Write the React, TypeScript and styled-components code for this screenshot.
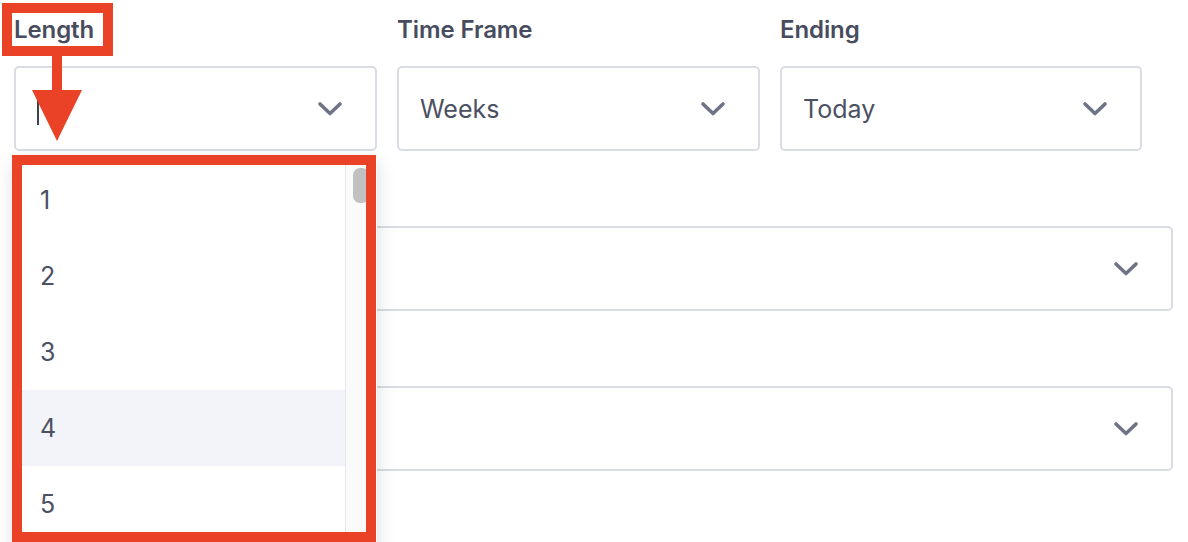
import { createGlobalStyle, styled } from "styled-components";

const GlobalStyle = createGlobalStyle`
	html, body {
		margin: 0;
		padding: 0;
		background: #ffffff;
		overflow: hidden;
	}
	#root {
		height: 542px;
		overflow: hidden;
	}
`;

const lengths = [1, 2, 3, 4, 5];

const Chevron = () => (
	<svg width="26" height="16" viewBox="0 0 26 16" fill="none">
		<polyline points="3,3 13,12.5 23,3" stroke="#6e7385" strokeWidth="3.6" strokeLinecap="round" strokeLinejoin="round" />
	</svg>
);

const App = () => {
	return (
		<>
			<GlobalStyle />
			<Page>
				<Row>
					<Field $width="363px">
						<Label>Length</Label>
						<Select>
							<Caret />
							<Chevron />
						</Select>
						<Menu>
							<List>
								{lengths.map(n => (
									<Item key={n} $active={n === 4}>{n}</Item>
								))}
							</List>
							<Track>
								<Thumb />
							</Track>
						</Menu>
						<LabelMark />
						<Arrow width="50" height="86" viewBox="0 0 50 86">
							<rect x="20" y="0" width="10" height="36" fill="#e94226" />
							<polygon points="0,34 50,34 25,85" fill="#e94226" />
						</Arrow>
						<MenuMark />
					</Field>
					<Field $width="363px">
						<Label>Time Frame</Label>
						<Select>
							<Value>Weeks</Value>
							<Chevron />
						</Select>
					</Field>
					<Field $width="362px">
						<Label>Ending</Label>
						<Select>
							<Value>Today</Value>
							<Chevron />
						</Select>
					</Field>
				</Row>
				<Field $width="100%" $spaced>
					<Label />
					<Select>
						<Value />
						<Chevron />
					</Select>
				</Field>
				<Field $width="100%" $spaced>
					<Label />
					<Select>
						<Value />
						<Chevron />
					</Select>
				</Field>
			</Page>
		</>
	);
};

const Page = styled.div`
	box-sizing: border-box;
	width: 1188px;
	padding: 14px 15px 0 14px;
	font-family: Inter, "Liberation Sans", sans-serif;
	color: #494e60;
`;

const Row = styled.div`
	display: flex;
	gap: 20px;
`;

const Field = styled.div<{ $width: string; $spaced?: boolean }>`
	position: relative;
	display: flex;
	flex-direction: column;
	gap: 20px;
	width: ${props => props.$width};
	margin-top: ${props => (props.$spaced ? "23px" : "0")};
`;

const Label = styled.div`
	height: 32px;
	font-size: 24px;
	line-height: 32px;
	font-weight: 600;
	color: #474c5e;
	letter-spacing: -0.1px;
`;

const Select = styled.div`
	box-sizing: border-box;
	height: 85px;
	display: flex;
	align-items: center;
	justify-content: space-between;
	padding: 0 32px 0 21px;
	border: 2px solid #d9dce3;
	border-radius: 5px;
	background: #ffffff;
`;

const Value = styled.span`
	font-size: 25px;
	color: #4b5062;
`;

const Caret = styled.span`
	display: block;
	width: 2px;
	height: 32px;
	background: #3c4050;
`;

const Menu = styled.div`
	position: absolute;
	left: 0;
	top: 144px;
	width: 363px;
	height: 400px;
	display: flex;
	background: #ffffff;
	box-shadow: 0 4px 18px rgba(0, 0, 0, 0.14);
	z-index: 5;
`;

const List = styled.div`
	flex: 1;
	padding-top: 4px;
`;

const Item = styled.div<{ $active: boolean }>`
	height: 76px;
	display: flex;
	align-items: center;
	padding-left: 26px;
	font-size: 25px;
	color: #4b5062;
	background: ${props => (props.$active ? "#f3f4f9" : "transparent")};
`;

const Track = styled.div`
	width: 31px;
	background: #fafafa;
	border-left: 1px solid #e8e8e8;
`;

const Thumb = styled.div`
	margin: 10px 0 0 7px;
	width: 16px;
	height: 35px;
	border-radius: 7px;
	background: #c1c1c1;
`;

const LabelMark = styled.div`
	position: absolute;
	left: -12px;
	top: -11px;
	box-sizing: border-box;
	width: 111px;
	height: 53px;
	border: 10px solid #e94226;
	z-index: 10;
`;

const Arrow = styled.svg`
	position: absolute;
	left: 18px;
	top: 42px;
	z-index: 10;
`;

const MenuMark = styled.div`
	position: absolute;
	left: -2px;
	top: 141px;
	box-sizing: border-box;
	width: 364px;
	height: 387px;
	border: 10px solid #e94226;
	z-index: 10;
`;

export default App;
